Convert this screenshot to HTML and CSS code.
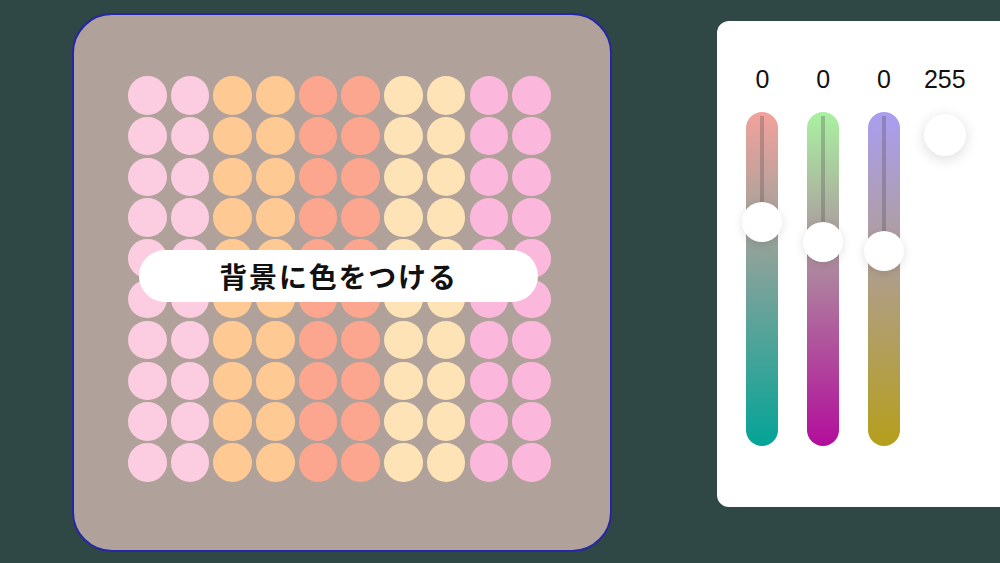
FILE: index.html
```html
<!DOCTYPE html>
<html lang="ja">
<head>
<meta charset="utf-8">
<link rel="stylesheet" href="styles.css">
</head>
<body>
<div class="stage">
  <section class="board">
    <div class="grid">
      <span class="dot c1"></span><span class="dot c1"></span><span class="dot c2"></span><span class="dot c2"></span><span class="dot c3"></span><span class="dot c3"></span><span class="dot c4"></span><span class="dot c4"></span><span class="dot c5"></span><span class="dot c5"></span>
      <span class="dot c1"></span><span class="dot c1"></span><span class="dot c2"></span><span class="dot c2"></span><span class="dot c3"></span><span class="dot c3"></span><span class="dot c4"></span><span class="dot c4"></span><span class="dot c5"></span><span class="dot c5"></span>
      <span class="dot c1"></span><span class="dot c1"></span><span class="dot c2"></span><span class="dot c2"></span><span class="dot c3"></span><span class="dot c3"></span><span class="dot c4"></span><span class="dot c4"></span><span class="dot c5"></span><span class="dot c5"></span>
      <span class="dot c1"></span><span class="dot c1"></span><span class="dot c2"></span><span class="dot c2"></span><span class="dot c3"></span><span class="dot c3"></span><span class="dot c4"></span><span class="dot c4"></span><span class="dot c5"></span><span class="dot c5"></span>
      <span class="dot c1"></span><span class="dot c1"></span><span class="dot c2"></span><span class="dot c2"></span><span class="dot c3"></span><span class="dot c3"></span><span class="dot c4"></span><span class="dot c4"></span><span class="dot c5"></span><span class="dot c5"></span>
      <span class="dot c1"></span><span class="dot c1"></span><span class="dot c2"></span><span class="dot c2"></span><span class="dot c3"></span><span class="dot c3"></span><span class="dot c4"></span><span class="dot c4"></span><span class="dot c5"></span><span class="dot c5"></span>
      <span class="dot c1"></span><span class="dot c1"></span><span class="dot c2"></span><span class="dot c2"></span><span class="dot c3"></span><span class="dot c3"></span><span class="dot c4"></span><span class="dot c4"></span><span class="dot c5"></span><span class="dot c5"></span>
      <span class="dot c1"></span><span class="dot c1"></span><span class="dot c2"></span><span class="dot c2"></span><span class="dot c3"></span><span class="dot c3"></span><span class="dot c4"></span><span class="dot c4"></span><span class="dot c5"></span><span class="dot c5"></span>
      <span class="dot c1"></span><span class="dot c1"></span><span class="dot c2"></span><span class="dot c2"></span><span class="dot c3"></span><span class="dot c3"></span><span class="dot c4"></span><span class="dot c4"></span><span class="dot c5"></span><span class="dot c5"></span>
      <span class="dot c1"></span><span class="dot c1"></span><span class="dot c2"></span><span class="dot c2"></span><span class="dot c3"></span><span class="dot c3"></span><span class="dot c4"></span><span class="dot c4"></span><span class="dot c5"></span><span class="dot c5"></span>
    </div>
    <div class="label">背景に色をつける</div>
  </section>
  <section class="panel">
    <div class="values">
      <span class="val">0</span>
      <span class="val">0</span>
      <span class="val">0</span>
      <span class="val">255</span>
    </div>
    <div class="sliders">
      <div class="col">
        <div class="track red">
          <span class="line" style="height: 90px"></span>
          <span class="thumb" style="top: 90px"></span>
        </div>
      </div>
      <div class="col">
        <div class="track green">
          <span class="line" style="height: 110px"></span>
          <span class="thumb" style="top: 110px"></span>
        </div>
      </div>
      <div class="col">
        <div class="track blue">
          <span class="line" style="height: 119px"></span>
          <span class="thumb" style="top: 119px"></span>
        </div>
      </div>
      <div class="col">
        <span class="alpha"></span>
      </div>
    </div>
  </section>
</div>
</body>
</html>
```
FILE: styles.css
```css
html, body {
  margin: 0;
  padding: 0;
  width: 1000px;
  height: 563px;
  overflow: hidden;
  background: #2f4845;
  font-family: "Liberation Sans", "Noto Sans CJK JP", sans-serif;
}

.stage {
  display: flex;
  align-items: flex-start;
  padding: 13px 0 0 72px;
}

.board {
  position: relative;
  box-sizing: border-box;
  width: 540px;
  height: 539px;
  flex: none;
  border: 2px solid #2626a8;
  border-radius: 40px;
  background: #b0a29b;
  padding: 61px 0 0 54px;
}

.grid {
  display: grid;
  grid-template-columns: repeat(10, 38.5px);
  grid-auto-rows: 38px;
  column-gap: 4.2px;
  row-gap: 2.8px;
}

.dot {
  display: block;
  width: 38.5px;
  height: 38.5px;
  border-radius: 50%;
}
.c1 { background: #fccde0; }
.c2 { background: #fec993; }
.c3 { background: #fda68f; }
.c4 { background: #fde3b5; }
.c5 { background: #fcb8dc; }

.label {
  position: absolute;
  left: 65px;
  top: 235px;
  width: 399px;
  height: 52px;
  border-radius: 26px;
  background: #ffffff;
  display: flex;
  align-items: center;
  justify-content: center;
  font-family: "Noto Sans CJK JP", sans-serif;
  font-weight: 700;
  font-size: 28px;
  letter-spacing: 1.8px;
  color: #111111;
}

.panel {
  box-sizing: border-box;
  flex: none;
  width: 300px;
  height: 486px;
  margin: 8px 0 0 105px;
  background: #ffffff;
  border-radius: 12px;
  padding: 44px 0 0 15px;
}

.values {
  display: grid;
  grid-template-columns: repeat(4, 60.8px);
  height: 28px;
  align-items: center;
}

.val {
  text-align: center;
  font-size: 25px;
  color: #111111;
}

.sliders {
  display: grid;
  grid-template-columns: repeat(4, 60.8px);
  margin-top: 19px;
}

.col {
  display: flex;
  justify-content: center;
}

.track {
  position: relative;
  width: 32px;
  height: 334px;
  border-radius: 16px;
}
.red { background: linear-gradient(#f3a19c, #04a497); }
.green { background: linear-gradient(#a9f1a1, #b30d9b); }
.blue { background: linear-gradient(#aa9df1, #b59f1c); }

.line {
  position: absolute;
  left: 14px;
  top: 4px;
  width: 4px;
  background: rgba(70, 70, 70, 0.28);
}

.thumb {
  position: absolute;
  left: -4px;
  width: 40px;
  height: 40px;
  border-radius: 50%;
  background: #ffffff;
  box-shadow: 0 2px 10px rgba(0, 0, 0, 0.12);
}

.alpha {
  display: block;
  width: 42px;
  height: 42px;
  margin-top: 2px;
  border-radius: 50%;
  background: #ffffff;
  box-shadow: 0 3px 14px rgba(0, 0, 0, 0.14);
}
```
